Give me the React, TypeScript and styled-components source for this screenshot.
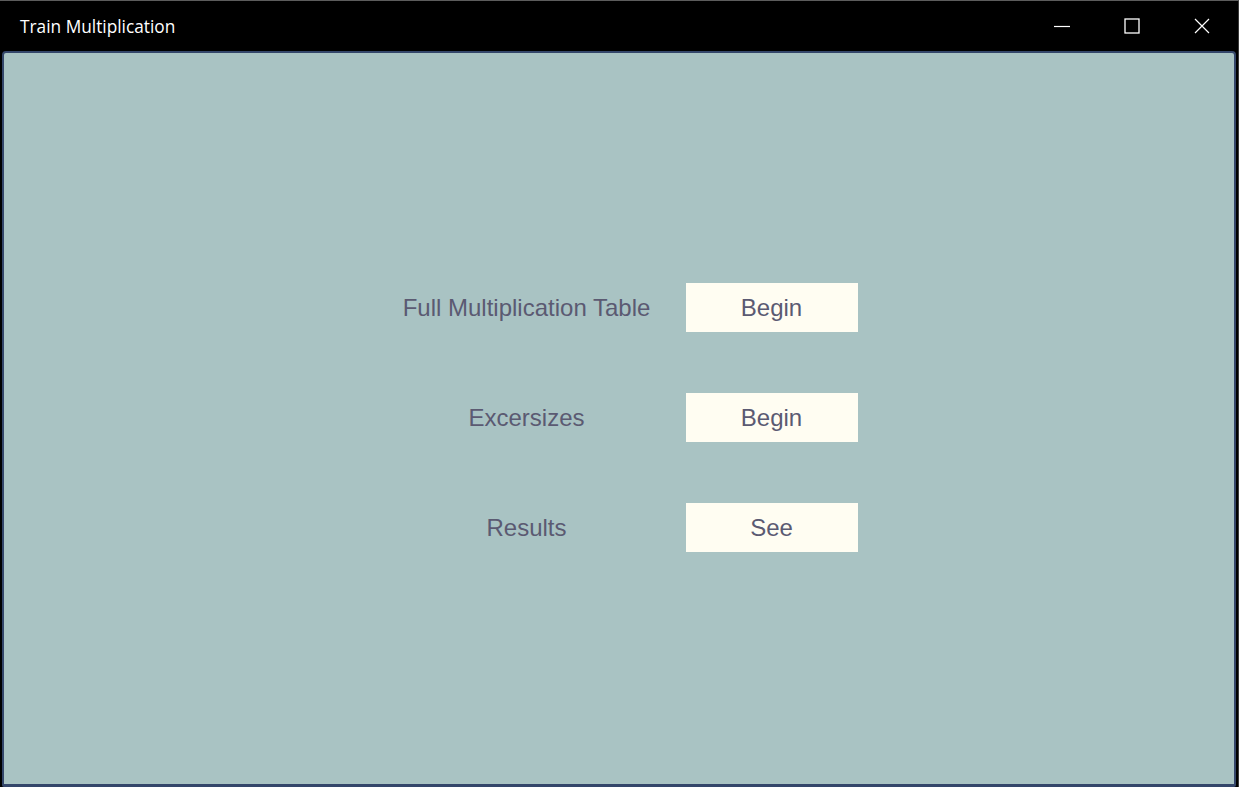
import React from 'react';
import styled, { createGlobalStyle } from 'styled-components';

const GlobalStyle = createGlobalStyle`
  html, body {
    margin: 0;
    padding: 0;
    background: #000;
  }
  * {
    box-sizing: border-box;
  }
`;

const Window = styled.div`
  display: flex;
  flex-direction: column;
  width: 1239px;
  height: 787px;
  background: #000;
  border-top: 1px solid #5c5c5c;
  border-right: 1px solid #3a3a3a;
  overflow: hidden;
`;

const TitleBar = styled.div`
  display: flex;
  align-items: center;
  height: 50px;
  flex-shrink: 0;
  padding-left: 20px;
`;

const Title = styled.div`
  flex: 1;
  color: #ffffff;
  font-family: 'Open Sans', 'Noto Sans', sans-serif;
  font-size: 17.3px;
  padding-top: 1px;
`;

const Controls = styled.div`
  display: flex;
  height: 100%;
  margin-right: 1px;
`;

const ControlButton = styled.div`
  display: flex;
  align-items: center;
  justify-content: center;
  width: 70px;
  height: 100%;
  color: #ffffff;
`;

const Content = styled.div`
  flex: 1;
  display: flex;
  justify-content: center;
  align-items: center;
  margin: 0 2px 0 2px;
  padding-left: 16px;
  padding-bottom: 2px;
  background: #a9c3c3;
  border: 2px solid #34466a;
  border-bottom-width: 3px;
  border-radius: 4px 4px 2px 2px;
`;

const Menu = styled.div`
  display: grid;
  grid-template-columns: 260px 172px;
  column-gap: 29px;
  row-gap: 61px;
  align-items: center;
`;

const Label = styled.div`
  text-align: center;
  color: #5b5a72;
  font-family: 'Liberation Sans', Arial, sans-serif;
  font-size: 24px;
`;

const ActionButton = styled.button`
  height: 49px;
  border: none;
  background: #fffdf2;
  color: #5b5a72;
  font-family: 'Liberation Sans', Arial, sans-serif;
  font-size: 24px;
  padding: 0;
  cursor: pointer;
`;

const items = [
  { label: 'Full Multiplication Table', action: 'Begin' },
  { label: 'Excersizes', action: 'Begin' },
  { label: 'Results', action: 'See' },
];

export default function App(): JSX.Element {
  return (
    <>
      <GlobalStyle />
      <Window>
        <TitleBar>
          <Title>Train Multiplication</Title>
          <Controls>
            <ControlButton>
              <svg width="16" height="16" viewBox="0 0 16 16">
                <line x1="0" y1="8.5" x2="16" y2="8.5" stroke="#fff" strokeWidth="1.2" />
              </svg>
            </ControlButton>
            <ControlButton>
              <svg width="16" height="16" viewBox="0 0 16 16">
                <rect x="1" y="1" width="14" height="14" fill="none" stroke="#fff" strokeWidth="1.3" />
              </svg>
            </ControlButton>
            <ControlButton>
              <svg width="16" height="16" viewBox="0 0 16 16">
                <path d="M1 1 L15 15 M15 1 L1 15" stroke="#fff" strokeWidth="1.2" />
              </svg>
            </ControlButton>
          </Controls>
        </TitleBar>
        <Content>
          <Menu>
            {items.map((item) => (
              <React.Fragment key={item.label}>
                <Label>{item.label}</Label>
                <ActionButton>{item.action}</ActionButton>
              </React.Fragment>
            ))}
          </Menu>
        </Content>
      </Window>
    </>
  );
}
